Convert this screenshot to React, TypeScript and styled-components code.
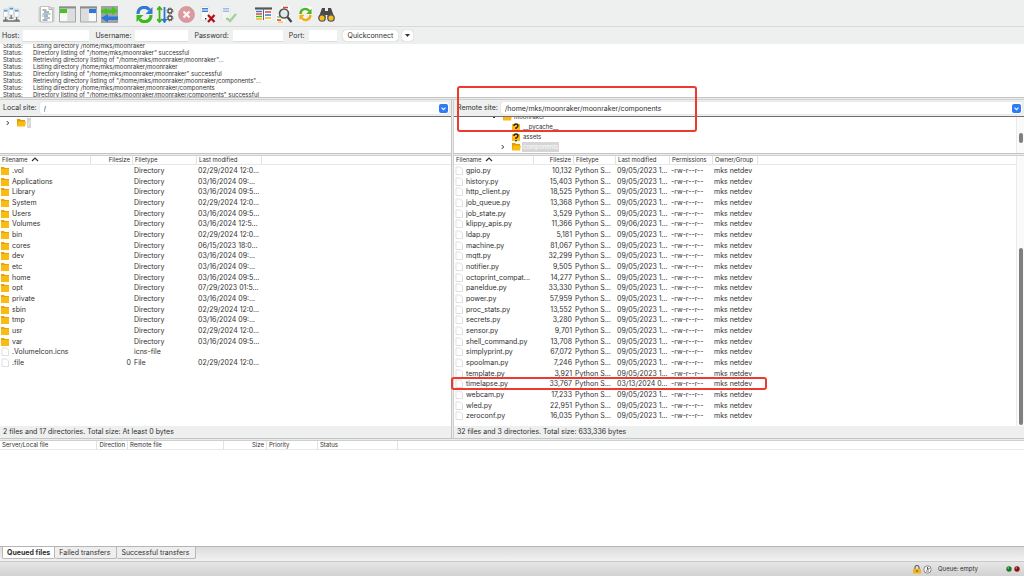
import React from "react";
import styled, { createGlobalStyle } from "styled-components";

const GlobalStyle = createGlobalStyle`
  * { box-sizing: border-box; }
  html, body { margin: 0; padding: 0; }
  body { font-family: Inter, "Liberation Sans", sans-serif; color: #303030; background: #fff; }
  button, input { font: inherit; color: inherit; }
`;

const Shell = styled.div`
  display: flex;
  flex-direction: column;
  min-height: 100vh;
  overflow: hidden;
  background: #fff;
  font-size: 7px;
  line-height: 10px;
`;

const Toolbar = styled.header`
  display: flex;
  gap: 18px;
  height: 27px;
  padding: 6px 3px 4px;
  background: #eeefef;
  border-bottom: 1px solid #d9dada;
`;

const ToolGroup = styled.div`
  display: flex;
  gap: 4px;
`;

const ToolButton = styled.button<{ $dim?: boolean }>`
  width: 17px;
  height: 17px;
  padding: 0;
  border: 0;
  background: none;
  opacity: ${(p) => (p.$dim ? 0.45 : 1)};
  svg { display: block; width: 17px; height: 17px; }
`;

const ConnectBar = styled.form`
  display: flex;
  align-items: center;
  height: 17px;
  padding: 0 2px;
  background: #eeefef;
`;

const Field = styled.label<{ $width: number }>`
  display: flex;
  align-items: center;
  gap: 4px;
  margin-right: 6px;
  input { width: ${(p) => p.$width}px; }
`;

const TextBox = styled.input`
  height: 12px;
  padding: 0 2px;
  border: 0;
  border-bottom: 1px solid #dcdcdc;
  background: #fff;
  outline: none;
`;

const PushButton = styled.button`
  display: flex;
  align-items: center;
  justify-content: center;
  height: 11px;
  margin-right: 4px;
  padding: 0 5px;
  border: 0;
  border-radius: 3px;
  background: #fff;
  box-shadow: 0 0 1px #999;
  line-height: 10px;
`;

const ArrowButton = styled(PushButton)`
  width: 11px;
  padding: 0;
`;

const Log = styled.section`
  height: 53px;
  overflow: hidden;
  font-size: 6px;
  line-height: 7px;
  > :first-child { margin-top: -2px; }
`;

const LogLine = styled.div`
  display: grid;
  grid-template-columns: 30px 1fr;
  padding-left: 3px;
`;

const Divider = styled.div`
  flex: none;
  height: 3px;
  border-top: 1px solid #c4c4c4;
  border-bottom: 1px solid #cfcfcf;
  background: #ececec;
`;

const Panes = styled.main`
  display: grid;
  grid-template-columns: 451fr 3px 570fr;
`;

const PaneDivider = styled.div`
  border-left: 1px solid #c4c4c4;
  border-right: 1px solid #cfcfcf;
  background: #ececec;
`;

const Pane = styled.section`
  position: relative;
  display: flex;
  flex-direction: column;
  min-width: 0;
`;

const SiteBar = styled.label`
  display: flex;
  align-items: center;
  gap: 3px;
  height: 17px;
  padding: 0 2px 0 3px;
  background: #eeefef;
  border-bottom: 1px solid #6e6e6e;
`;

const Combo = styled.span`
  display: flex;
  flex: 1;
  align-items: center;
  height: 12px;
  padding: 0 1px 0 4px;
  border-radius: 2px;
  background: #fff;
  box-shadow: 0 0 1px #bbb;
  input { flex: 1; min-width: 0; height: 11px; padding: 0; border: 0; background: none; outline: none; }
`;

const ComboButton = styled.button`
  width: 9px;
  height: 9px;
  padding: 0;
  border: 0;
  border-radius: 2px;
  background: #2f7bf6;
  svg { display: block; }
`;

const TreeArea = styled.div`
  display: flex;
  flex: none;
`;

const ListArea = styled.div`
  display: flex;
  flex: 1;
`;

const Tree = styled.ul<{ $scrolled?: boolean }>`
  flex: 1;
  height: 36px;
  margin: 0;
  padding: 0;
  overflow: hidden;
  list-style: none;
  font-size: 6px;
  li:first-child { margin-top: ${(p) => (p.$scrolled ? -5 : 1)}px; }
`;

const TreeItem = styled.li<{ $indent: number }>`
  display: flex;
  align-items: center;
  gap: 2px;
  height: 10px;
  padding-left: ${(p) => p.$indent}px;
  svg { flex: none; }
`;

const TreeIcon = styled.span`
  display: flex;
  width: 8px;
  margin-left: 5px;
`;

const TreeLabel = styled.span<{ $selected?: boolean }>`
  line-height: 10px;
  padding: 0 1px;
  background: ${(p) => (p.$selected ? "#d6d6d6" : "transparent")};
  color: ${(p) => (p.$selected ? "#fff" : "inherit")};
`;

const Track = styled.div`
  display: flex;
  flex-direction: column;
  justify-content: flex-end;
  width: 8px;
  padding: 1px;
  border-left: 1px solid #ebebeb;
  background: #fafafa;
`;

const Thumb = styled.div<{ $share: number; $below?: number }>`
  flex: 0 0 ${(p) => p.$share}%;
  width: 4px;
  margin: 0 1px ${(p) => p.$below || 0}px;
  border-radius: 2px;
  background: #7f7f7f;
`;

const ListBody = styled.div`
  flex: 1;
  min-width: 0;
  padding-bottom: 5px;
`;

const FileTable = styled.table`
  width: 100%;
  border-collapse: separate;
  border-spacing: 0;
  table-layout: fixed;
  white-space: nowrap;
  th {
    height: 9px;
    padding: 0 2px;
    border-right: 1px solid #e2e2e2;
    border-bottom: 1px solid #e8e8e8;
    font-size: 6px;
    font-weight: 400;
    line-height: 8px;
    text-align: left;
  }
  th:last-child { border-right: 0; }
  td { padding: 0 2px 0 1px; }
  tbody tr { height: 11px; }
  tbody tr:nth-child(3n) { height: 10px; }
  th.num, td.num { padding-right: 2px; text-align: right; }
`;

const FileCell = styled.td`
  position: relative;
  svg { margin: 0 3px 0 0; vertical-align: top; }
`;

const SortArrow = styled.svg`
  margin-left: 3px;
`;

const Summary = styled.div`
  height: 12px;
  padding-left: 3px;
  background: #eeefef;
  line-height: 12px;
`;

const RedFrame = styled.span`
  position: absolute;
  z-index: 1;
  border: 2px solid #ec3a2c;
  border-radius: 3px;
  pointer-events: none;
`;

const PathFrame = styled(RedFrame)`
  top: -14px;
  left: 3px;
  width: 240px;
  height: 46px;
`;

const RowFrame = styled(RedFrame)`
  top: -2px;
  left: -3px;
  width: 316px;
  height: 13px;
`;

const Queue = styled.section`
  flex: 1;
`;

const Tabs = styled.nav`
  display: flex;
  align-items: flex-start;
  height: 15px;
  padding-left: 2px;
  border-top: 1px solid #b5b5b5;
  background: linear-gradient(#dcdcdc, #f2f2f2);
`;

const Tab = styled.button<{ $active?: boolean }>`
  height: 12px;
  padding: 0 6px 0 4px;
  border: 1px solid #b9b9b9;
  border-top: 0;
  border-left-width: ${(p) => (p.$active ? 1 : 0)}px;
  border-radius: 0 0 2px 2px;
  background: ${(p) => (p.$active ? "#fff" : "#eee")};
  font-weight: ${(p) => (p.$active ? 700 : 400)};
  line-height: 11px;
  ${(p) => p.$active && "padding-right: 4px;"}
`;

const StatusBar = styled.footer`
  display: flex;
  align-items: center;
  justify-content: flex-end;
  gap: 2px;
  height: 15px;
  padding-right: 4px;
  border-top: 1px solid #c9c9c9;
  background: linear-gradient(#e6e6e6, #d2d2d2);
  font-size: 6px;
`;

const QueueState = styled.span`
  margin: 0 26px 0 4px;
`;

const Folder = () => (
  <svg width="8" height="9" viewBox="0 0 8 9">
    <path d="M0 1h3l1 1h4v7H0z" fill="#e5a50a" />
    <path d="M0 3h8v6H0z" fill="#fbbc12" />
  </svg>
);

const OpenFolder = () => (
  <svg width="9" height="8" viewBox="0 0 9 8">
    <path d="M0 0h3l1 1h4v6H0z" fill="#e09c00" />
    <path d="M1 2.500h8L8 7.500H0z" fill="#fbbc12" />
  </svg>
);

const Unknown = () => (
  <svg width="8" height="9" viewBox="0 0 8 9">
    <path d="M0 1h8v7H0z" fill="#fbb916" />
    <path d="M2 3Q2 1 4 1T6 3Q6 4 4 5V6" fill="none" stroke="#222" strokeWidth="1.4" />
    <path d="M3.3 7h1.4v1.4H3.3z" fill="#222" />
  </svg>
);

const Doc = () => (
  <svg width="8" height="9" viewBox="0 0 8 9">
    <path d="M1 1h4.5L7.5 3v5.5H1z" fill="#fff" stroke="#d2d2d2" strokeWidth=".7" />
  </svg>
);

const Chevron = () => (
  <svg width="4" height="6" viewBox="0 0 4 6">
    <path d="M.7 1l2 2-2 2" fill="none" stroke="#333" />
  </svg>
);

const OpenChevron = () => (
  <svg width="4" height="6" viewBox="0 0 4 6">
    <path d="M0 2l2 2 2-2" fill="none" stroke="#333" />
  </svg>
);

const Window = ({ children }: { children: React.ReactNode }) => (
  <svg viewBox="0 0 17 17">
    <path d="M.5 1h16v15H.5z" fill="#e3e3e3" stroke="#a5a5a5" />
    <path d="M0 .5h17v2H0z" fill="#8c8c8c" />
    {children}
  </svg>
);

const server = (x: number, y: number) => (
  <g key={x}>
    <path d={`M${x} ${y}h4.5v8h-4.500z`} fill="#fbfcfc" stroke="#c2c8cc" strokeWidth=".6" />
    <path d={`M${x + 0.5} ${y + 0.8}h3.500v1.800h-3.500z`} fill="#5b9bdc" />
    <path d={`M${x + 2.2} ${y + 8}v4M${x} ${y + 11}h4.500`} stroke="#707070" strokeWidth="1.200" />
  </g>
);

const gear = (cx: number, cy: number) => (
  <g>
    <circle cx={cx} cy={cy} r="2" fill="none" stroke="#555" strokeWidth="1.3" />
    <circle cx={cx} cy={cy} r="3" fill="none" stroke="#555" strokeWidth="1" strokeDasharray="1.2 1.15" />
  </g>
);

const Refresh = ({ top, bottom }: { top: string; bottom: string }) => (
  <>
    <path d="M2 8C2 0 11 0 13.5 4" fill="none" stroke={top} strokeWidth="3.2" />
    <path d="M16.5 1v7H9.500z" fill={top} />
    <path d="M15 9c0 8-9 8-11.5 4" fill="none" stroke={bottom} strokeWidth="3.2" />
    <path d="M.5 16V9h7z" fill={bottom} />
  </>
);

const Server = () => (
  <>
    <path d="M2 .5h8v14H2z" fill="#fafafa" stroke="#dddddd" strokeWidth=".7" />
    <path d="M3 2h6v1.5H3zM3 4.5h6V6H3z" fill="#3f80cf" />
    <path d="M6 12h1.4v1.4H6z" fill="#333" />
  </>
);

type Tool = { label: string; dim?: boolean; art: React.ReactNode };

const toolGroups: Tool[][] = [
  [
    {
      label: "Site Manager",
      art: (
        <svg viewBox="0 0 17 17">
          {server(0.5, 3)}
          {server(6, 1)}
          {server(11.5, 3)}
          <path d="M0 15h17" stroke="#666" strokeWidth="1.400" />
        </svg>
      ),
    },
  ],
  [
    {
      label: "Toggle message log",
      art: (
        <svg viewBox="0 0 17 17">
          <path d="M.5 1h16v15H.5z" fill="#cfcfcf" />
          <path d="M2.500 .5H11l3.500 3V16h-12z" fill="#fff" stroke="#aaa" strokeWidth=".7" />
          <path d="M11 .5v3h3" fill="none" stroke="#999" strokeWidth=".8" />
          <path d="M4.5 4h4M6 6h5M6 10h4M4.5 14h5" stroke="#555" strokeWidth=".9" />
          <path d="M4.5 8h6M6 12h6" stroke="#3b7cc4" strokeWidth=".9" />
          <path d="M10.500 8h2M4 10h1.500" stroke="#4db81e" strokeWidth=".9" />
        </svg>
      ),
    },
    {
      label: "Toggle local tree",
      art: (
        <Window>
          <path d="M1 3h7v4H1z" fill="#43c51c" />
          <path d="M1 7.5h7V15H1z" fill="#f9f9f9" />
          <path d="M9 3h7v12H9z" fill="#ddd" />
        </Window>
      ),
    },
    {
      label: "Toggle remote tree",
      art: (
        <Window>
          <path d="M9 3h7v4H9z" fill="#2b77d7" />
          <path d="M9 7.5h7V15H9z" fill="#f9f9f9" />
          <path d="M1 3h7v12H1z" fill="#ddd" />
        </Window>
      ),
    },
    {
      label: "Toggle transfer queue",
      art: (
        <svg viewBox="0 0 17 17">
          <path d="M0 0h17v17H0z" fill="#a2a2a2" />
          <path d="M0 3.500h4V2l3 1.500h4V.5l6 4.500-6 4V7H7L4 8.500V7H0z" fill="#43c51c" />
          <path d="M17 10.500H7V8l-7 4 7 4.500V14h10z" fill="#2b77d7" />
        </svg>
      ),
    },
  ],
  [
    {
      label: "Refresh",
      art: (
        <svg viewBox="0 0 17 17">
          <Refresh top="#3279d4" bottom="#3cb81e" />
        </svg>
      ),
    },
    {
      label: "Process queue",
      art: (
        <svg viewBox="0 0 17 17">
          <path d="M2.5 1v15M0 4l2.5-3L5 4M0 13l2.5 3L5 13" stroke="#43b51c" strokeWidth="1.8" fill="none" />
          <path d="M7.5 1v15M5.5 13l2 3 2-3" stroke="#2b77d7" strokeWidth="1.8" fill="none" />
          {gear(13, 5)}
          {gear(13, 12)}
        </svg>
      ),
    },
    {
      label: "Cancel",
      dim: true,
      art: (
        <svg viewBox="0 0 17 17">
          <circle cx="8.5" cy="8.5" r="8" fill="#c8303a" stroke="#8c3036" strokeWidth=".7" />
          <path d="M5.5 5.5l6 6M11.5 5.5l-6 6" stroke="#fff" strokeWidth="2.4" />
        </svg>
      ),
    },
    {
      label: "Disconnect",
      art: (
        <svg viewBox="0 0 17 17">
          <Server />
          <path d="M9 9l6.500 7M15.500 9L9 16" stroke="#b40c14" strokeWidth="2.2" />
        </svg>
      ),
    },
    {
      label: "Reconnect",
      dim: true,
      art: (
        <svg viewBox="0 0 17 17">
          <Server />
          <path d="M7 12l3 3 6-7" fill="none" stroke="#3fb52a" strokeWidth="2.4" />
        </svg>
      ),
    },
  ],
  [
    {
      label: "Filter",
      art: (
        <svg viewBox="0 0 17 17">
          <path d="M.5 2h7.500v12H.5zM9 2h7.500v12H9z" fill="#fff" />
          <path d="M0 2.500h17" stroke="#555" strokeWidth="2.200" />
          <path d="M1 5.500h6M10 9h6" stroke="#2b77d7" strokeWidth="1.400" />
          <path d="M1 8h6M10 6h6" stroke="#e04030" strokeWidth="1.400" />
          <path d="M1 10.500h6" stroke="#43b51c" strokeWidth="1.500" />
          <path d="M10 12h6M1 13h6" stroke="#efb313" strokeWidth="1.400" />
          <path d="M8.500 2v12" stroke="#666" />
        </svg>
      ),
    },
    {
      label: "Compare directories",
      art: (
        <svg viewBox="0 0 17 17">
          <path d="M5 0h9v11H5zM0 8h9v8H0z" fill="#fafafa" />
          <path d="M7 1.500h5M1 14h4" stroke="#e04030" strokeWidth="1.300" />
          <path d="M1 11h3" stroke="#43b51c" />
          <path d="M2 16h5" stroke="#efb313" />
          <circle cx="8" cy="7.500" r="4.500" fill="#dbe3e7" fillOpacity=".8" stroke="#555" strokeWidth="1.700" />
          <path d="M11.500 11l4 5" stroke="#444" strokeWidth="2.300" />
        </svg>
      ),
    },
    {
      label: "Synchronized browsing",
      art: (
        <svg viewBox="0 0 17 17">
          <path d="M5 0h11v10H5zM1 7h9v9H1z" fill="#fafafa" stroke="#ddd" strokeWidth=".5" />
          <g transform="translate(2 2) scale(.76)">
            <Refresh top="#4bb61f" bottom="#f3ae12" />
          </g>
        </svg>
      ),
    },
    {
      label: "Search",
      art: (
        <svg viewBox="0 0 17 17">
          <path d="M4 2h3v3h3V2h3l3.500 10H9.500V9h-2v3H.5z" fill="#4a4a4a" />
          <circle cx="4" cy="12" r="3.200" fill="#f6bd1c" stroke="#555" strokeWidth="1.300" />
          <circle cx="13" cy="12" r="3.200" fill="#f6bd1c" stroke="#555" strokeWidth="1.300" />
        </svg>
      ),
    },
  ],
];

const fields = [
  { label: "Host:", width: 66 },
  { label: "Username:", width: 53 },
  { label: "Password:", width: 50 },
  { label: "Port:", width: 28 },
];

const logLines = [
  "Listing directory /home/mks/moonraker",
  'Directory listing of "/home/mks/moonraker" successful',
  'Retrieving directory listing of "/home/mks/moonraker/moonraker"...',
  "Listing directory /home/mks/moonraker/moonraker",
  'Directory listing of "/home/mks/moonraker/moonraker" successful',
  'Retrieving directory listing of "/home/mks/moonraker/moonraker/components"...',
  "Listing directory /home/mks/moonraker/moonraker/components",
  'Directory listing of "/home/mks/moonraker/moonraker/components" successful',
];

const localDirs: [string, string][] = [
  [".vol", "02/29/2024 12:0..."],
  ["Applications", "03/16/2024 09:..."],
  ["Library", "03/16/2024 09:5..."],
  ["System", "02/29/2024 12:0..."],
  ["Users", "03/16/2024 09:5..."],
  ["Volumes", "03/16/2024 12:5..."],
  ["bin", "02/29/2024 12:0..."],
  ["cores", "06/15/2023 18:0..."],
  ["dev", "03/16/2024 09:..."],
  ["etc", "03/16/2024 09:..."],
  ["home", "03/16/2024 09:5..."],
  ["opt", "07/29/2023 01:5..."],
  ["private", "03/16/2024 09:..."],
  ["sbin", "02/29/2024 12:0..."],
  ["tmp", "03/16/2024 09:..."],
  ["usr", "02/29/2024 12:0..."],
  ["var", "03/16/2024 09:5..."],
];

const localRows = [
  ...localDirs.map(([name, date]) => ({ name, size: "", type: "Directory", date })),
  { name: ".VolumeIcon.icns", size: "", type: "icns-file", date: "" },
  { name: ".file", size: "0", type: "File", date: "02/29/2024 12:0..." },
];

const remoteRows: [string, string, string][] = [
  ["gpio.py", "10,132", "09/05/2023 1..."],
  ["history.py", "15,403", "09/05/2023 1..."],
  ["http_client.py", "18,525", "09/05/2023 1..."],
  ["job_queue.py", "13,368", "09/05/2023 1..."],
  ["job_state.py", "3,529", "09/05/2023 1..."],
  ["klippy_apis.py", "11,366", "09/06/2023 1..."],
  ["ldap.py", "5,181", "09/05/2023 1..."],
  ["machine.py", "81,067", "09/05/2023 1..."],
  ["mqtt.py", "32,299", "09/05/2023 1..."],
  ["notifier.py", "9,505", "09/05/2023 1..."],
  ["octoprint_compat...", "14,277", "09/05/2023 1..."],
  ["paneldue.py", "33,330", "09/05/2023 1..."],
  ["power.py", "57,959", "09/05/2023 1..."],
  ["proc_stats.py", "13,552", "09/05/2023 1..."],
  ["secrets.py", "3,280", "09/05/2023 1..."],
  ["sensor.py", "9,701", "09/05/2023 1..."],
  ["shell_command.py", "13,708", "09/05/2023 1..."],
  ["simplyprint.py", "67,072", "09/05/2023 1..."],
  ["spoolman.py", "7,246", "09/05/2023 1..."],
  ["template.py", "3,921", "09/05/2023 1..."],
  ["timelapse.py", "33,767", "03/13/2024 0..."],
  ["webcam.py", "17,233", "09/05/2023 1..."],
  ["wled.py", "22,951", "09/05/2023 1..."],
  ["zeroconf.py", "16,035", "09/05/2023 1..."],
];

type Column = { name: string; width: number; num?: boolean; sorted?: boolean };

const localColumns: Column[] = [
  { name: "Filename", width: 91, sorted: true },
  { name: "Filesize", width: 42, num: true },
  { name: "Filetype", width: 64 },
  { name: "Last modified", width: 65 },
];

const remoteColumns: Column[] = [
  { name: "Filename", width: 80, sorted: true },
  { name: "Filesize", width: 40, num: true },
  { name: "Filetype", width: 42 },
  { name: "Last modified", width: 54 },
  { name: "Permissions", width: 43 },
  { name: "Owner/Group", width: 45 },
];

const queueColumns: Column[] = [
  { name: "Server/Local file", width: 97 },
  { name: "Direction", width: 31, num: true },
  { name: "Remote file", width: 96 },
  { name: "Size", width: 43, num: true },
  { name: "Priority", width: 51 },
  { name: "Status", width: 80 },
];

function TableHead({ columns }: { columns: Column[] }) {
  return (
    <>
      <colgroup>
        {columns.map((c) => (
          <col key={c.name} width={c.width} />
        ))}
        <col />
      </colgroup>
      <thead>
        <tr>
          {columns.map((c) => (
            <th key={c.name} className={c.num ? "num" : undefined}>
              {c.name}
              {c.sorted && (
                <SortArrow width="8" height="5" viewBox="0 0 8 5">
                  <path d="M1 4l3-3 3 3" fill="none" stroke="#333" strokeWidth="1.200" />
                </SortArrow>
              )}
            </th>
          ))}
          <th />
        </tr>
      </thead>
    </>
  );
}

function SiteField({ label, path }: { label: string; path: string }) {
  return (
    <SiteBar>
      {label}
      <Combo>
        <input defaultValue={path} />
        <ComboButton type="button" aria-label={`${label} history`}>
          <svg width="9" height="9" viewBox="0 0 9 9">
            <path d="M2.500 3.700l2 2 2-2" fill="none" stroke="#fff" strokeWidth="1.100" />
          </svg>
        </ComboButton>
      </Combo>
    </SiteBar>
  );
}

export default function App() {
  return (
    <Shell>
      <GlobalStyle />
      <Toolbar>
        {toolGroups.map((group, i) => (
          <ToolGroup key={i}>
            {group.map((tool) => (
              <ToolButton key={tool.label} type="button" aria-label={tool.label} $dim={tool.dim}>
                {tool.art}
              </ToolButton>
            ))}
          </ToolGroup>
        ))}
      </Toolbar>

      <ConnectBar onSubmit={(e) => e.preventDefault()}>
        {fields.map((f) => (
          <Field key={f.label} $width={f.width}>
            {f.label}
            <TextBox type={f.label === "Password:" ? "password" : "text"} />
          </Field>
        ))}
        <PushButton type="submit">Quickconnect</PushButton>
        <ArrowButton type="button" aria-label="Recent servers">
          <svg width="5" height="3" viewBox="0 0 5 3">
            <path d="M0 0h5L2.500 3z" fill="#333" />
          </svg>
        </ArrowButton>
      </ConnectBar>

      <Log>
        {logLines.map((line) => (
          <LogLine key={line}>
            <span>Status:</span>
            <span>{line}</span>
          </LogLine>
        ))}
      </Log>
      <Divider />

      <Panes>
        <Pane>
          <SiteField label="Local site:" path="/" />
          <TreeArea>
            <Tree>
              <TreeItem $indent={6}>
                <Chevron />
                <TreeIcon>
                  <OpenFolder />
                </TreeIcon>
                <TreeLabel $selected>/</TreeLabel>
              </TreeItem>
            </Tree>
          </TreeArea>
          <Divider />
          <ListArea>
            <ListBody>
              <FileTable>
                <TableHead columns={localColumns} />
                <tbody>
                  {localRows.map((r) => (
                    <tr key={r.name}>
                      <FileCell>
                        {r.type === "Directory" ? <Folder /> : <Doc />}
                        {r.name}
                      </FileCell>
                      <td className="num">{r.size}</td>
                      <td>{r.type}</td>
                      <td>{r.date}</td>
                      <td />
                    </tr>
                  ))}
                </tbody>
              </FileTable>
            </ListBody>
          </ListArea>
          <Summary>2 files and 17 directories. Total size: At least 0 bytes</Summary>
        </Pane>

        <PaneDivider />

        <Pane>
          <PathFrame />
          <SiteField label="Remote site:" path="/home/mks/moonraker/moonraker/components" />
          <TreeArea>
            <Tree $scrolled>
              <TreeItem $indent={38}>
                <OpenChevron />
                <TreeIcon>
                  <OpenFolder />
                </TreeIcon>
                <TreeLabel>moonraker</TreeLabel>
              </TreeItem>
              <TreeItem $indent={53}>
                <TreeIcon>
                  <Unknown />
                </TreeIcon>
                <TreeLabel>__pycache__</TreeLabel>
              </TreeItem>
              <TreeItem $indent={53}>
                <TreeIcon>
                  <Unknown />
                </TreeIcon>
                <TreeLabel>assets</TreeLabel>
              </TreeItem>
              <TreeItem $indent={47}>
                <Chevron />
                <TreeIcon>
                  <OpenFolder />
                </TreeIcon>
                <TreeLabel $selected>components</TreeLabel>
              </TreeItem>
            </Tree>
            <Track>
              <Thumb $share={28} $below={9} />
            </Track>
          </TreeArea>
          <Divider />
          <ListArea>
            <ListBody>
              <FileTable>
                <TableHead columns={remoteColumns} />
                <tbody>
                  {remoteRows.map(([name, size, date]) => (
                    <tr key={name}>
                      <FileCell>
                        <Doc />
                        {name}
                        {name === "timelapse.py" && <RowFrame />}
                      </FileCell>
                      <td className="num">{size}</td>
                      <td>Python S...</td>
                      <td>{date}</td>
                      <td>-rw-r--r--</td>
                      <td>mks netdev</td>
                      <td />
                    </tr>
                  ))}
                </tbody>
              </FileTable>
            </ListBody>
            <Track>
              <Thumb $share={66} />
            </Track>
          </ListArea>
          <Summary>32 files and 3 directories. Total size: 633,336 bytes</Summary>
        </Pane>
      </Panes>
      <Divider />

      <Queue>
        <FileTable>
          <TableHead columns={queueColumns} />
        </FileTable>
      </Queue>

      <Tabs>
        <Tab type="button" $active>
          Queued files
        </Tab>
        <Tab type="button">Failed transfers</Tab>
        <Tab type="button">Successful transfers</Tab>
      </Tabs>

      <StatusBar>
        <svg width="8" height="9" viewBox="0 0 8 9">
          <path d="M2 4V2.500a2 2 0 014 0V4" fill="none" stroke="#666" strokeWidth="1.200" />
          <path d="M0 4h8v4.500H0z" fill="#f5b312" />
          <path d="M3.500 5h1v2h-1z" fill="#664400" />
        </svg>
        <svg width="9" height="9" viewBox="0 0 9 9">
          <circle cx="4.500" cy="4.500" r="3.700" fill="#f4f4f4" stroke="#8a8a8a" />
          <path d="M4.500 4.500V2M4.500 4.500l2-1" stroke="#555" />
          <path d="M3 5h3v2H3z" fill="#bbb" />
        </svg>
        <QueueState>Queue: empty</QueueState>
        <svg width="6" height="6" viewBox="0 0 6 6">
          <circle cx="3" cy="3" r="2.700" fill="#1d7a24" />
          <circle cx="2.300" cy="2" r=".8" fill="#9fdc9f" />
        </svg>
        <svg width="6" height="6" viewBox="0 0 6 6">
          <circle cx="3" cy="3" r="2.700" fill="#8a1414" />
          <circle cx="2.300" cy="2" r=".8" fill="#e09a9a" />
        </svg>
      </StatusBar>
    </Shell>
  );
}
